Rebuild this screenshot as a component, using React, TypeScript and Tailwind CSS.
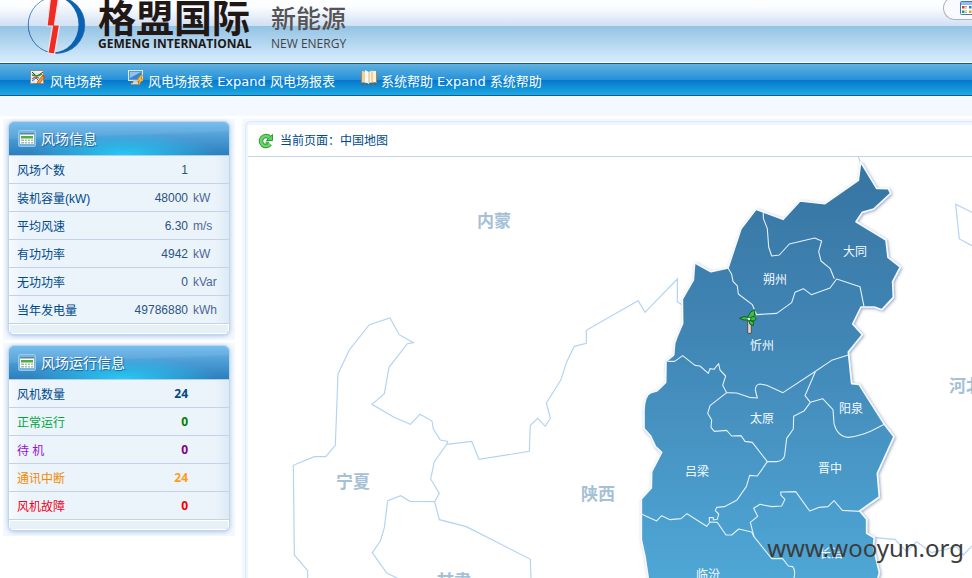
import type { ReactNode } from "react";

const CJK = "font-['Liberation_Sans','Noto_Sans_CJK_SC',sans-serif]";

type Row = { label: string; value: string; unit?: string; tone?: string; valueTone?: string };

const farmInfo: Row[] = [
  { label: "风场个数", value: "1" },
  { label: "装机容量(kW)", value: "48000", unit: "kW" },
  { label: "平均风速", value: "6.30", unit: "m/s" },
  { label: "有功功率", value: "4942", unit: "kW" },
  { label: "无功功率", value: "0", unit: "kVar" },
  { label: "当年发电量", value: "49786880", unit: "kWh" },
];

const statusInfo: Row[] = [
  { label: "风机数量", value: "24", tone: "text-[#004a8b]", valueTone: "text-[#004a80]" },
  { label: "正常运行", value: "0", tone: "text-[#00a63c]", valueTone: "text-[#008000]" },
  { label: "待 机", value: "0", tone: "text-[#9512d8]", valueTone: "text-[#800080]" },
  { label: "通讯中断", value: "24", tone: "text-[#f28a00]", valueTone: "text-[#ff9c1a]" },
  { label: "风机故障", value: "0", tone: "text-[#f00020]", valueTone: "text-[#f00000]" },
];

function Logo() {
  return (
    <svg width="60" height="56" viewBox="0 0 60 56" aria-hidden="true">
      <circle cx="29.500" cy="25" r="28.500" fill="#0961b3" />
      <ellipse cx="26.500" cy="24.500" rx="25" ry="28" fill="url(#disc)" />
      <circle cx="29.500" cy="25" r="28.300" fill="none" stroke="#3f6fa5" strokeWidth=".7" />
      <defs>
        <linearGradient id="disc" gradientUnits="userSpaceOnUse" x1="0" y1="0" x2="0" y2="54">
          <stop offset="0" stopColor="#fff" />
          <stop offset=".48" stopColor="#d2e1f4" />
          <stop offset=".48" stopColor="#98c6e5" />
          <stop offset="1" stopColor="#cce6f9" />
        </linearGradient>
      </defs>
      <path fill="#ee2c24" stroke="#f6e4ea" strokeWidth="1.200" d="M23.500 -2h8L27.500 25H32.500L27.500 54 21 53 25.500 26H20z" />
    </svg>
  );
}

function ChartIcon() {
  return (
    <svg width="16" height="16" viewBox="0 0 16 16" aria-hidden="true">
      <rect x=".5" y=".5" width="13" height="13" fill="#f3f3ee" stroke="#8d8d86" />
      <path d="M1 4h12M1 8h12M4 1v12" stroke="#c9d4dc" />
      <path d="M2 2l4 4 3-1 4-3" fill="none" stroke="#333" />
      <path d="M2 5c3 0 5 3 10-1" fill="none" stroke="#1d9b32" strokeWidth="1.500" />
      <path d="M2 11l4-3 3 3" fill="none" stroke="#2b6fc2" />
      <path d="M2 9l3-2 4 1" fill="none" stroke="#d82f22" />
      <path d="M7 14l1-3 5-6 2 2-5 6z" fill="#f39a2c" stroke="#a3540f" strokeWidth=".7" />
      <path d="M12 6l1-1 2 2-1 1z" fill="#d94434" />
    </svg>
  );
}

function MonitorIcon() {
  return (
    <svg width="16" height="16" viewBox="0 0 16 16" aria-hidden="true">
      <rect x=".5" y=".5" width="14" height="10" fill="#4d9be3" stroke="#e8e4d3" />
      <rect x="2" y="2" width="11" height="7" fill="#3d83d1" />
      <path d="M2 2h11L2 8z" fill="#8cc3f2" />
      <path d="M5 11h5v2h2v1.500H3V13h2z" fill="#dfdac6" stroke="#8a8674" strokeWidth=".5" />
      <path d="M13 5l-4 5h2.500L10 15l5.500-6H13l1.500-4z" fill="#ffc62e" stroke="#d27a0c" strokeWidth=".7" />
    </svg>
  );
}

function BookIcon() {
  return (
    <svg width="16" height="16" viewBox="0 0 16 16" aria-hidden="true">
      <path d="M0 2h16v11H0z" fill="#b5824c" />
      <path d="M1 1l6 1v11l-6-1z" fill="#ead1a4" />
      <path d="M4 0l4 2v12l-4-2z" fill="#fffaf0" />
      <path d="M8 2c2-2 5-1 7-1v11c-3 0-5 0-7 1z" fill="#fff1d3" />
      <path d="M8 2v11M11 1v11" stroke="#c9a674" strokeWidth=".8" />
      <path d="M1 14.500h2m2 0h2m2 0h2m2 0h2" stroke="#7d552b" />
    </svg>
  );
}

function TableIcon() {
  return (
    <svg width="18" height="17" viewBox="0 0 18 17" aria-hidden="true">
      <rect x=".5" y=".5" width="17" height="16" rx="1.500" fill="#79b6de" stroke="#a3cfec" strokeOpacity=".8" />
      <rect x="2" y="3" width="14" height="11" fill="#fff" />
      <path fill="#5e8798" d="M2 3h14v1.500H2z" />
      <path fill="#4caf3e" d="M3 6h12v2.500H3z" />
      <path fill="#9fbdb4" d="M3 9.500h3v1.500H3zM7 9.500h2v1.500H7zM10 9.500h2v1.500h-2zM13 9.500h2v1.500h-2zM3 12h3v1.500H3zM7 12h2v1.500H7zM10 12h2v1.500h-2zM13 12h2v1.500h-2z" />
    </svg>
  );
}

function RefreshIcon() {
  return (
    <svg width="16" height="16" viewBox="0 0 16 16" aria-hidden="true">
      <path d="M12 11A5 5 0 1 1 11.500 4.500" fill="none" stroke="#2b9b35" strokeWidth="4.500" />
      <path d="M14.500 1.500v6H8.500z" fill="#5fd163" stroke="#2b9b35" />
      <path d="M12 11A5 5 0 1 1 11.500 4.500" fill="none" stroke="#6cd66c" strokeWidth="2.600" />
      <path d="M7.500 8.500H11V11H7.500z" fill="#4dba50" />
    </svg>
  );
}

function PaletteIcon() {
  return (
    <svg width="16" height="15" viewBox="0 0 16 15" aria-hidden="true">
      <rect x=".5" y=".5" width="15" height="13" rx="1" fill="#fff" stroke="#4179b5" />
      <path d="M1 1h14v3H1z" fill="#8fc0ee" />
      <path d="M2 5h2.500v2.500H2z" fill="#ee2c24" />
      <path d="M9 5h2.500v2.500H9z" fill="#3976d0" />
      <path d="M2 9.500h2.500V12H2z" fill="#30a137" />
      <path d="M9 9.500h2.500V12H9z" fill="#f0a400" />
      <path d="M5 5.500h2M5 7h2M5 10h2M5 11.500h2M12.500 5.500h2M12.500 7h2M12.500 10h2M12.500 11.500h2" stroke="#a7b0b8" />
    </svg>
  );
}

function NavLink({ icon, children }: { icon: ReactNode; children: ReactNode }) {
  return (
    <a href="#" className="flex items-center gap-1 text-white">
      <span className="-mt-2">{icon}</span>
      <span className="whitespace-nowrap">{children}</span>
    </a>
  );
}

function Panel({ title, rows, strong }: { title: string; rows: Row[]; strong?: boolean }) {
  return (
    <div className="bg-[#f3f8fe] px-[5px] pt-[2px] pb-[5px]">
      <section className="overflow-hidden rounded-md border border-[#c3d5ea] bg-[#eaf3fa] shadow-[0_1px_4px_#a9c4e8]">
        <h2 className="flex h-[34px] items-center gap-[5px] border-b border-[#b8cde4] bg-[radial-gradient(ellipse_95px_22px_at_52%_100%,#25cbf8,#25cbf800),linear-gradient(178deg,#ffffff14_16px,#ffffff00_18px),linear-gradient(#6cb8ed,#4a9ad2_17px,#2a7fbd)] pl-[9px] text-sm font-normal text-white [text-shadow:1px_1px_1px_#1c5f94]">
          <TableIcon />
          {title}
        </h2>
        <table className="w-full table-fixed border-separate border-spacing-0 bg-[linear-gradient(90deg,#f7fbfe,#ebf3fb_12px,#ecf4fb_205px,#dceaf4)] text-xs">
          <tbody>
            {rows.map((r) => (
              <tr key={r.label}>
                <th scope="row" className={`h-7 w-[100px] border-b border-[#c5d1e4] p-0 pt-[2px] pl-2 text-left font-normal whitespace-nowrap ${r.tone ?? "text-[#004a8b]"}`}>
                  {r.label}
                </th>
                <td className={`h-7 w-[79px] border-b border-[#c5d1e4] p-0 pt-px text-right ${strong ? "font-['Open_Sans',sans-serif] font-bold" : ""} ${r.valueTone ?? "text-[#2c5480]"}`}>
                  {r.value}
                </td>
                <td className="h-7 border-b border-[#c5d1e4] p-0 pt-px pl-[5px] text-[#4f6796]">{r.unit}</td>
              </tr>
            ))}
          </tbody>
        </table>
        <div className="h-[10px] border border-white bg-[#e6f0f7]" />
      </section>
    </div>
  );
}

const cityLabels: [string, number, number][] = [
  ["大同", 855, 256],
  ["朔州", 775, 284],
  ["忻州", 762, 350],
  ["太原", 762, 423],
  ["阳泉", 851, 413],
  ["吕梁", 697, 476],
  ["晋中", 830, 473],
  ["长治", 831, 558],
  ["临汾", 708, 579],
];

const neighbourLabels: [string, number, number][] = [
  ["内蒙", 494, 227],
  ["宁夏", 353, 488],
  ["陕西", 598, 500],
  ["甘肃", 454, 587],
  ["河北", 966, 392],
];

const PROVINCE =
  "M692 36L740 115 775 116 782 130 731 177 697 187 678 215 768 270 774 322 811 351 788 395 790 442 756 479 733 471 693 471 668 522 697 554 655 606 665 701 687 703 763 823 792 860 742 970 748 1041 689 1083 710 1108 710 1150 733 1163 730 1190 748 1268 740 1300 57 1300 45 1220 34 1170 34 1047 64 1014 65 965 95 907 76 889 62 858 42 836 42 780Q44 735 62 728L82 722 107 697 108 634 131 615 134 580 141 560 158 520 157 447 190 390 194 338 243 365 294 354 333 236 378 178 459 208 510 153 585 161 685 91Z";

function ShanxiMap() {
  return (
    <svg className="block h-full w-full" viewBox="248 157 724 421" preserveAspectRatio="xMinYMin slice" role="img" aria-label="中国地图">
      <defs>
        <linearGradient id="land" gradientUnits="userSpaceOnUse" x1="0" y1="36" x2="0" y2="1290">
          <stop offset="0" stopColor="#3674a2" />
          <stop offset=".4" stopColor="#4085b4" />
          <stop offset="1" stopColor="#4fa7d6" />
        </linearGradient>
        <filter id="edge" x="-10%" y="-10%" width="120%" height="120%">
          <feDropShadow dx="3" dy="3" stdDeviation="5" floodColor="#3d5a8c" floodOpacity=".55" />
        </filter>
      </defs>
      <g fill="none" stroke="#b2d3f2" strokeWidth="3.500">
        <g transform="translate(280 300) scale(.33333)">
          <path d="M83 834V812L43 765 40 496 103 470H137L166 436 174 222 208 150 268 74 330 54 358 104 400 128 382 131 327 202 313 281 276 313 342 352 391 373 420 343 456 363 460 387 481 420 503 424 500 433 463 485 452 537 478 580 464 605 390 604 362 587 323 602 313 683 301 723 277 758 321 820 352 834" />
          <path d="M464 605L478 659 559 680 751 778 753 834M500 433L575 424 597 478 748 454 751 376 773 355 796 379 811 354 799 309 842 241 860 186 883 139 919 130V91L1074 2" />
        </g>
        <g transform="translate(630 150) scale(.33333)">
          <path d="M24 451L45 487 142 387V456L157 464M685 20L692 40M1026 187L977 163 988 267 1026 287M733 1163L795 1168 830 1205 860 1175 905 1208 980 1190 1000 1215 1026 1188" />
        </g>
      </g>
      <g transform="translate(630 150) scale(.33333)" strokeLinejoin="round">
        <path d={PROVINCE} fill="url(#land)" stroke="#f4f9fd" strokeWidth="5" filter="url(#edge)" />
        <g fill="none" stroke="#e4f1f9" strokeWidth="3.300">
          <path d="M400 187V205L412 236 416 291 425 318 448 315 478 282 554 264 575 273 566 305 573 333 600 355 613 386" />
          <path d="M294 354L305 373 309 394 322 408 325 432 367 464 380 494 440 490 485 458 495 427 520 416 544 434 600 414 620 387 690 410 702 470" />
          <path d="M113 634H134L158 617 195 646 210 648 235 670 240 656 252 658 266 641 270 660 287 678 278 706 290 728 320 729 358 742 382 744 376 720Q377 702 390 702L410 706 459 728 552 667 605 631 655 615" />
          <path d="M290 728L240 767 233 790 245 810 243 832 253 844 290 841 305 858 333 857 345 874 367 877 412 935H440Q462 932 464 915L470 865 490 837 491 799 523 782 541 757 525 737 556 665" />
          <path d="M541 757L578 746 609 779 612 820Q622 860 655 862 690 858 725 842L763 823" />
          <path d="M412 935L382 978 359 976 349 1010 320 1051 283 1070 260 1072 256 1082 266 1092 262 1108 250 1110V1103H238V1115" />
          <path d="M34 1092L80 1113 95 1097 120 1109 153 1106 171 1091 230 1129 240 1116 262 1117 288 1155H305L326 1137 365 1146 372 1160" />
          <path d="M689 1084L637 1081 612 1052 594 1070 568 1072 539 1083 497 1025 452 1026 453 1036 465 1048 455 1068 425 1070 390 1063 371 1075 383 1099 361 1117 372 1160 425 1226 458 1226 475 1248 488 1250Q500 1262 488 1300" />
        </g>
        <path d="M353 513H364V550H353z" fill="#d8d8d8" stroke="#5b4b47" strokeWidth="3" />
        <g fill="#3cc042" stroke="#12601b" strokeWidth="3">
          <path d="M354 500L362 486 375 479 373 496 362 508z" />
          <path d="M356 510L342 510 328 505 342 500 358 502z" />
          <path d="M362 502L372 499 378 506 373 513 362 512z" />
          <path d="M356 510L370 515 370 527 360 523z" />
        </g>
        <circle cx="357" cy="507" r="4" fill="#e9ffe5" />
      </g>
      <g textAnchor="middle" className={CJK}>
        {neighbourLabels.map(([name, x, y]) => (
          <text key={name} x={x} y={y} fill="#a5c1d6" fontSize="17" fontWeight="700">
            {name}
          </text>
        ))}
        {cityLabels.map(([name, x, y]) => (
          <text key={name} x={x} y={y} fill="#f6fbff" fontSize="12">
            {name}
          </text>
        ))}
      </g>
    </svg>
  );
}

export default function App() {
  return (
    <div className={`relative flex h-screen flex-col overflow-hidden bg-white ${CJK}`}>
      <header className="flex h-[62px] shrink-0 items-start bg-[linear-gradient(#ffffff_0,#fafcff_8px,#d0dff3_26px,#93c3e4_26px,#d5ebfd_61px)] pl-[27px]">
        <Logo />
        <div className="ml-[11px] w-[157px]">
          <div className="h-9 text-[38px] leading-[38px] font-bold whitespace-nowrap text-[#211815]">格盟国际</div>
          <div className="font-['Open_Sans',sans-serif] text-xs leading-[15px] font-bold whitespace-nowrap text-[#211815]">GEMENG INTERNATIONAL</div>
        </div>
        <div className="ml-4">
          <div className="h-9 text-[25px] leading-[39px] font-medium whitespace-nowrap text-[#555354]">新能源</div>
          <div className="font-['Open_Sans',sans-serif] text-xs leading-[15px] whitespace-nowrap text-[#444]">NEW ENERGY</div>
        </div>
        <button type="button" aria-label="换肤" className="-mt-1 ml-auto flex h-6 w-[29px] items-center overflow-hidden rounded-l-full border border-r-0 border-[#aab2c0] bg-[#f8faff] pt-px pl-4">
          <span className="shrink-0">
            <PaletteIcon />
          </span>
        </button>
      </header>

      <nav className="mt-px flex h-[33px] shrink-0 items-center gap-[26px] border-y border-[#125a9c] bg-[linear-gradient(#61b2de,#2390da_16px,#0675cc_16px,#1cabe1)] pt-1 pl-[30px] font-['DejaVu_Sans','Noto_Sans_CJK_SC',sans-serif] text-[13px]">
        <NavLink icon={<ChartIcon />}>风电场群</NavLink>
        <NavLink icon={<MonitorIcon />}>风电场报表 Expand 风电场报表</NavLink>
        <NavLink icon={<BookIcon />}>系统帮助 Expand 系统帮助</NavLink>
      </nav>

      <div className="mt-px mb-[3px] h-[19px] shrink-0 bg-[#f4f9ff]" />

      <div className="flex min-h-0 flex-1 gap-[7px] pl-[3px]">
        <aside className="flex w-[232px] shrink-0 flex-col gap-[3px]">
          <Panel title="风场信息" rows={farmInfo} />
          <Panel title="风场运行信息" rows={statusInfo} strong />
        </aside>
        <main className="flex min-w-0 flex-1 flex-col bg-[#f3f8fe] pt-[2px] pl-[3px]">
          <div className="flex min-h-0 flex-1 flex-col rounded-tl-md border-t border-l border-[#dce9f6] bg-[#eef5fc] pt-[3px] pl-[2px]">
            <div className="flex h-8 shrink-0 items-center gap-[6px] border-b border-[#c5d3e8] bg-white pl-[10px] text-xs text-[#004a8b]">
              <button type="button" aria-label="刷新">
                <RefreshIcon />
              </button>
              <span>当前页面：中国地图</span>
            </div>
            <div className="min-h-0 flex-1 overflow-hidden bg-white">
              <ShanxiMap />
            </div>
          </div>
        </main>
      </div>

      <div className="pointer-events-none absolute right-2 bottom-[14px] font-['Noto_Sans',sans-serif] text-2xl text-[#3c3c3c]">www.wooyun.org</div>
    </div>
  );
}
